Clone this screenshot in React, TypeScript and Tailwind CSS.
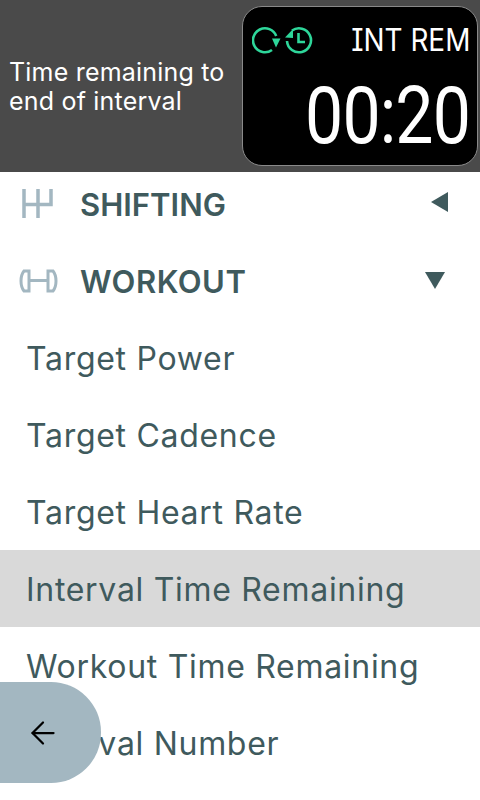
import { ArrowLeft } from "lucide-react";

const items = [
  "Target Power",
  "Target Cadence",
  "Target Heart Rate",
  "Interval Time Remaining",
  "Workout Time Remaining",
  "Interval Number",
];

function ShiftIcon() {
  return (
    <svg width="31" height="30" viewBox="0 0 31 30" fill="none" stroke="#a3b7c1" strokeWidth="3.5">
      <path d="M2 0V29M16 0V29M2 15.5H29V0" />
    </svg>
  );
}

function DumbbellIcon() {
  return (
    <svg width="39" height="24" viewBox="0 0 39 24" fill="none" stroke="#a3b7c1" strokeWidth="3">
      <path d="M5 2H10V22H5C1 17 1 7 5 2ZM34 2H29V22H34C38 17 38 7 34 2ZM10 11.5H29" />
    </svg>
  );
}

function StatusIcons() {
  return (
    <div className="flex gap-[4px] items-center">
      <svg width="29" height="28" viewBox="0 0 29 28" fill="none" stroke="#2ed69a" strokeWidth="2.6">
        <path d="M24.2 10A12 12 0 1 0 20 24" />
        <path d="M20 12.5H28.5L24 21.5Z" fill="#2ed69a" stroke="none" />
      </svg>
      <svg width="28" height="28" viewBox="0 0 28 28" fill="none" stroke="#2ed69a" strokeWidth="2.6">
        <path d="M7 4.5A12 12 0 1 1 2 15" />
        <path d="M0 11.5L8 12V3Z" fill="#2ed69a" stroke="none" />
        <path d="M13.5 7V16H20" />
      </svg>
    </div>
  );
}

export default function App() {
  return (
    <div className="relative h-[800px] w-[480px] overflow-hidden bg-white font-['Inter',sans-serif] text-[#3f5a5d]">
      {/* Header */}
      <div className="h-[172px] bg-[#4a4a4a] flex items-center justify-between pl-[9px] pr-[2px]">
        <p className="text-white text-[25px] leading-[29px] tracking-[.2px] w-[230px] pt-[2px]">
          Time remaining to end of interval
        </p>
        <div className="w-[236px] h-[160px] bg-black rounded-[20px] border border-[#8a8a8a] pl-[9px] pr-[7px] pt-[19px] flex flex-col">
          <div className="flex items-center justify-between">
            <StatusIcons />
            <span className="text-white text-[31px] leading-[28px] scale-x-[.9] origin-right [font-feature-settings:'cv08']">INT REM</span>
          </div>
          <div className="text-white text-right text-[79px] leading-[76px] mt-[24px] font-['Roboto',sans-serif] tracking-[-1px] scale-x-[.86] origin-right">
            00:20
          </div>
        </div>
      </div>

      {/* Sections */}
      <div className="h-[77px] flex items-center -mt-[7px] pl-[22px] pr-[32px]">
        <div className="w-[58px]"><ShiftIcon /></div>
        <span className="flex-1 text-[31px] font-semibold pt-[3px]">SHIFTING</span>
        <div className="w-0 h-0 -mt-[3px] border-y-[10px] border-y-transparent border-r-[17px] border-r-[#3f5a5d]" />
      </div>
      <div className="h-[77px] flex items-center pl-[19px] pr-[35px]">
        <div className="w-[61px]"><DumbbellIcon /></div>
        <span className="flex-1 text-[31px] font-semibold tracking-[.5px] pt-[3px]">WORKOUT</span>
        <div className="w-0 h-0 border-x-[10px] border-x-transparent border-t-[17px] border-t-[#3f5a5d]" />
      </div>

      {items.map((item) => (
        <div
          key={item}
          className={`h-[77px] flex items-center pl-[26px] pt-[3px] text-[32px] tracking-[.7px] ${item === "Interval Time Remaining" ? "bg-[#d9d9d9]" : ""}`}
        >
          {item}
        </div>
      ))}

      {/* Back button */}
      <div className="absolute left-0 top-[682px] w-[101px] h-[101px] bg-[#a3b7c1] rounded-r-[50px] flex items-center pl-[25px]">
        <ArrowLeft size={36} color="#000" strokeWidth={1.5} />
      </div>
    </div>
  );
}
